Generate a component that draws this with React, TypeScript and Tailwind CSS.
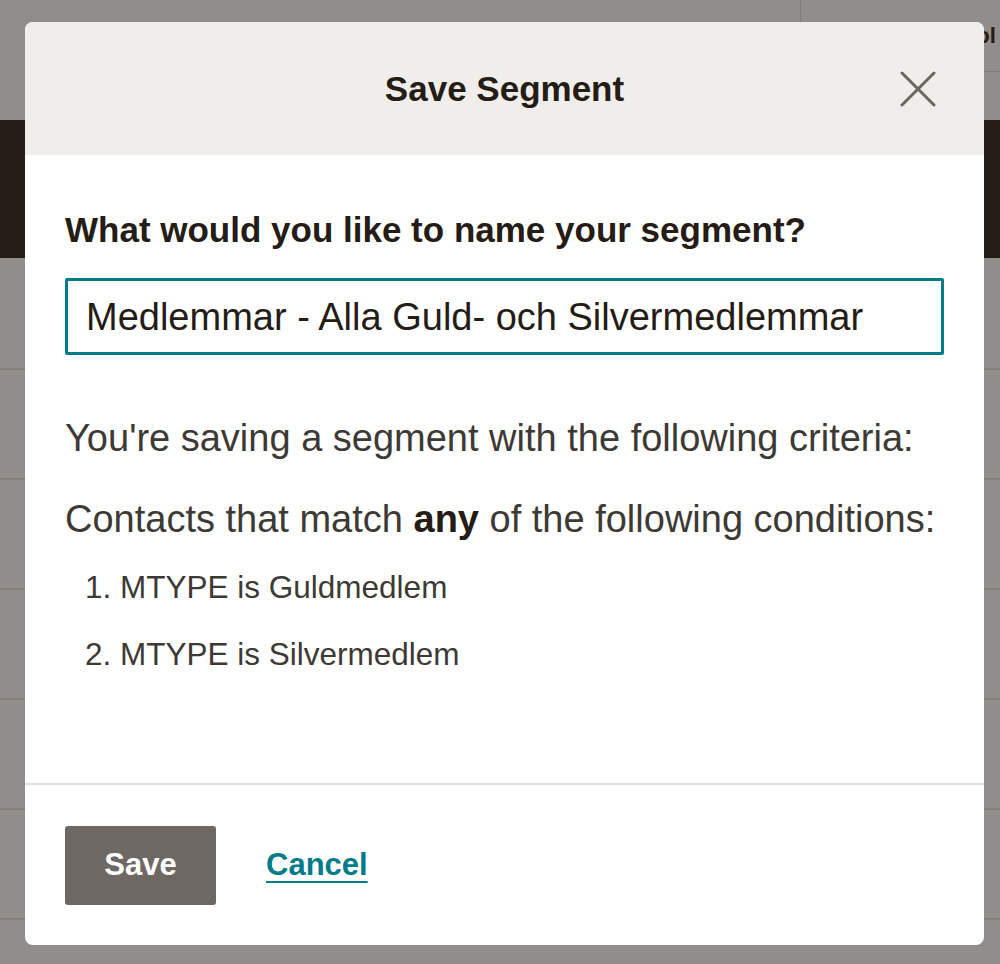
const rows = [0, 1, 2, 3, 4]

function BackgroundPage() {
  return (
    <div className="w-full h-[964px] overflow-hidden bg-white font-['Liberation_Sans',Arial,sans-serif]">
      <div className="flex h-[120px]">
        <div className="flex-1" />
        <div className="w-[200px] h-[72px] border-l border-b border-[#dcdad6] flex items-center pl-[150px]">
          <span className="text-[22px] font-bold text-[#241c15] whitespace-nowrap">Tool</span>
        </div>
      </div>
      <div className="h-[138px] bg-[#241c15]" />
      <div className="h-[112px] border-b-2 border-[#e2e0dc]" />
      {rows.map((r) => (
        <div key={r} className="h-[110px] border-b-2 border-[#e2e0dc]" />
      ))}
      <div className="flex items-start pt-[38px] text-[20px] text-[#241c15]">
        <span className="pl-[38px] w-[363px]">ℹ</span>
        <span className="tracking-[2px]">MEMBERSHIP</span>
      </div>
    </div>
  )
}

function CloseIcon() {
  return (
    <svg width="36" height="36" viewBox="0 0 36 36" fill="none" stroke="currentColor" strokeWidth="3" strokeLinecap="round">
      <path d="M2 2 L34 34" />
      <path d="M34 2 L2 34" />
    </svg>
  )
}

export default function App() {
  return (
    <div className="relative w-full h-[964px] overflow-hidden">
      <BackgroundPage />
      <div className="absolute inset-0 bg-[#241c15]/50 pt-[22px] pl-[25px] font-['Liberation_Sans',Arial,sans-serif]">
        <div
          role="dialog"
          className="w-[959px] h-[923px] rounded-[8px] overflow-hidden bg-white flex flex-col"
        >
          <div className="relative h-[133px] bg-[#efeeea] flex items-center justify-center shrink-0">
            <h2 className="text-[35px] font-bold text-[#241c15] leading-[40px]">Save Segment</h2>
            <button
              aria-label="Close"
              className="absolute right-[48px] top-[49px] w-[36px] h-[36px] flex items-center justify-center text-[#6b6661]"
            >
              <CloseIcon />
            </button>
          </div>

          <div className="h-[628px] px-[40px] pt-[55px] shrink-0">
            <label className="block text-[35px] font-bold text-[#241c15] leading-[40px]">
              What would you like to name your segment?
            </label>
            <div className="mt-[28px] h-[77px] border-[3px] border-[#007c89] rounded-[2px] flex items-center px-[18px]">
              <span className="text-[38px] text-[#241c15] leading-[44px] whitespace-nowrap">
                Medlemmar - Alla Guld- och Silvermedlemmar
              </span>
            </div>
            <p className="mt-[61px] text-[38px] leading-[44px] text-[#3d3935] whitespace-nowrap">
              You're saving a segment with the following criteria:
            </p>
            <p className="mt-[37px] text-[38px] leading-[44px] text-[#3d3935] whitespace-nowrap">
              Contacts that match <span className="font-bold text-[#241c15]">any</span> of the following conditions:
            </p>
            <ol className="mt-[26px] list-decimal list-inside pl-[20px] text-[31.5px] leading-[40px] text-[#3d3935]">
              <li>MTYPE is Guldmedlem</li>
              <li className="mt-[27px]">MTYPE is Silvermedlem</li>
            </ol>
          </div>

          <div className="h-[2px] bg-[#e2e0dc] shrink-0" />

          <div className="flex items-center gap-[50px] px-[40px] pt-[41px]">
            <button className="w-[151px] h-[79px] rounded-[3px] bg-[#6e6864] text-white text-[31px] font-bold">
              Save
            </button>
            <a href="#" className="text-[31px] font-bold text-[#007c89] underline underline-offset-[6px] decoration-[2px]">
              Cancel
            </a>
          </div>
        </div>
      </div>
    </div>
  )
}
